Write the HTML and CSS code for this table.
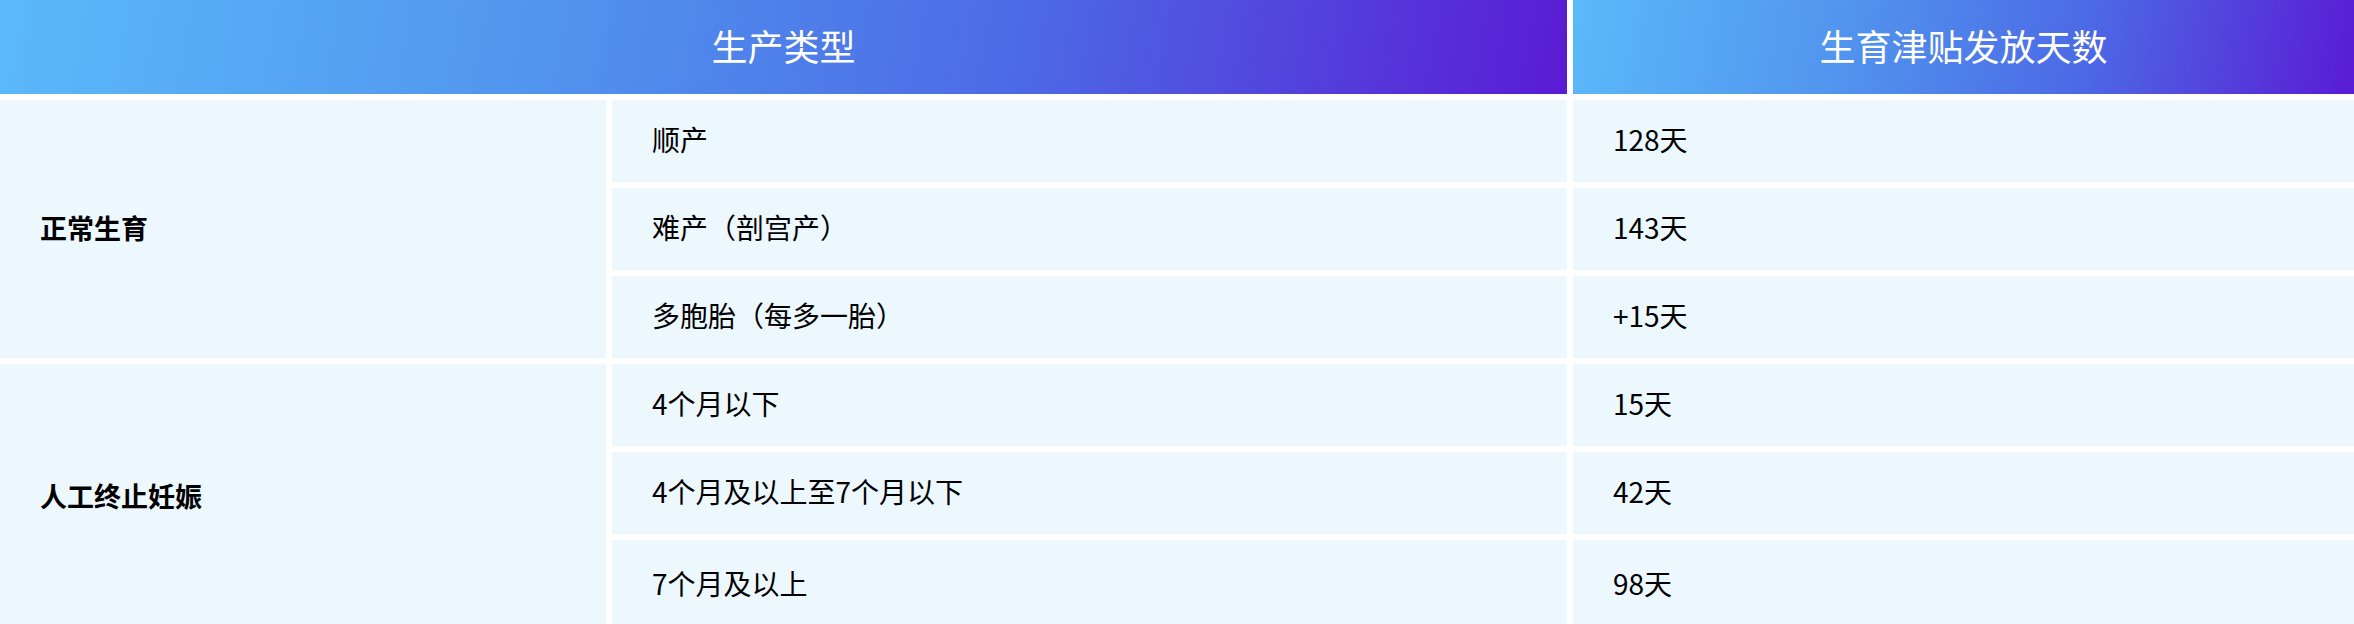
FILE: index.html
```html
<!DOCTYPE html>
<html lang="zh-CN">
<head>
<meta charset="utf-8">
<title>生育津贴发放天数</title>
<link rel="stylesheet" href="styles.css">
</head>
<body>
<div class="table">
  <div class="head head-type">生产类型</div>
  <div class="head head-days">生育津贴发放天数</div>

  <div class="cell group group-1">正常生育</div>
  <div class="cell">顺产</div>
  <div class="cell">128天</div>
  <div class="cell">难产（剖宫产）</div>
  <div class="cell">143天</div>
  <div class="cell">多胞胎（每多一胎）</div>
  <div class="cell">+15天</div>

  <div class="cell group group-2">人工终止妊娠</div>
  <div class="cell">4个月以下</div>
  <div class="cell">15天</div>
  <div class="cell">4个月及以上至7个月以下</div>
  <div class="cell">42天</div>
  <div class="cell">7个月及以上</div>
  <div class="cell">98天</div>
</div>
</body>
</html>
```

FILE: styles.css
```css
html, body {
  margin: 0;
  padding: 0;
  background: #ffffff;
}

body {
  width: 2354px;
  height: 624px;
  overflow: hidden;
  font-family: "Noto Sans CJK SC", "Noto Sans", sans-serif;
}

.table {
  display: grid;
  grid-template-columns: 606px 955px 781px;
  grid-template-rows: 94px repeat(5, 82px) 90px;
  column-gap: 6px;
  row-gap: 6px;
}

.head {
  display: flex;
  align-items: center;
  justify-content: center;
  padding-bottom: 4px;
  line-height: 1;
  color: #ffffff;
  font-size: 36px;
  font-weight: 400;
  background: linear-gradient(100deg, #5BB9F9 0%, #5194EE 35%, #4C6AE6 65%, #5A1BD4 100%);
}

.head-type {
  grid-column: 1 / 3;
}

.head-days {
  grid-column: 3 / 4;
}

.cell {
  display: flex;
  align-items: center;
  padding-left: 40px;
  padding-bottom: 4px;
  line-height: 1;
  background: #EDF7FE;
  color: #000000;
  font-size: 28px;
}

.group {
  grid-column: 1 / 2;
  font-weight: 700;
  font-size: 27px;
}

.group-1 {
  grid-row: 2 / 5;
}

.group-2 {
  grid-row: 5 / 8;
}
```
